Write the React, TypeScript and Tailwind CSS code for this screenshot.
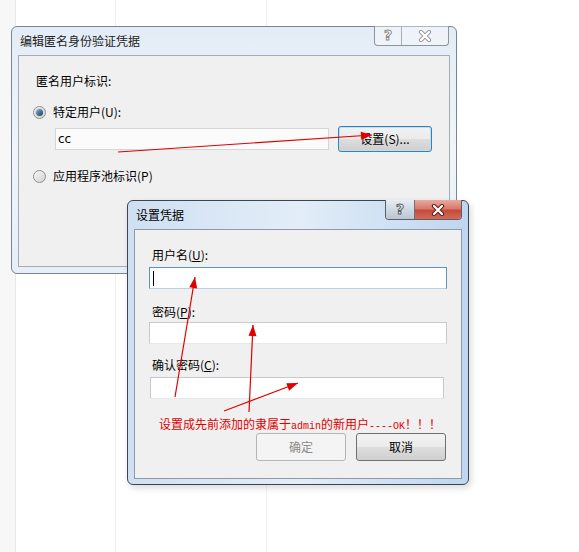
import React from 'react';

const btnBg = 'bg-[linear-gradient(#f2f2f2,#ebebeb_48%,#dddddd_52%,#cfcfcf)]';

const Radio = ({ checked }: { checked?: boolean }) => (
  <span className="w-[13px] h-[13px] rounded-full border border-[#8e8f8f] bg-linear-to-br from-[#f8f8f8] to-[#d2d2d2] flex items-center justify-center shrink-0">
    {checked && <span className="w-[7px] h-[7px] rounded-full bg-linear-to-br from-[#8fb6d6] to-[#1d3b58] ring-1 ring-[#c9dbe9]" />}
  </span>
);

const CloseGlyph = ({ active }: { active?: boolean }) => (
  <svg width="14" height="12" viewBox="0 0 14 12">
    <path d="M3 2 L11 10 M11 2 L3 10" stroke={active ? '#5a2018' : '#9c9c9c'} strokeWidth="4.2" strokeLinecap="round" />
    <path d="M3 2 L11 10 M11 2 L3 10" stroke="#ffffff" strokeWidth="2.2" strokeLinecap="round" />
  </svg>
);

function arrowHead(x1: number, y1: number, x2: number, y2: number) {
  const len = Math.hypot(x2 - x1, y2 - y1);
  const ux = (x2 - x1) / len;
  const uy = (y2 - y1) / len;
  const bx = x2 - ux * 11;
  const by = y2 - uy * 11;
  const px = -uy * 4;
  const py = ux * 4;
  return `${x2},${y2} ${bx + px},${by + py} ${bx - px},${by - py}`;
}

const arrows = [
  [118, 152, 372, 135],
  [175, 397, 195, 277],
  [249, 412, 253, 325],
  [224, 411, 298, 383],
];

export default function App() {
  return (
    <div className="relative w-[579px] h-[552px] overflow-hidden bg-white text-[12px] text-black font-['Noto_Sans_CJK_SC','Noto_Sans',sans-serif]">
      {/* background columns */}
      <div className="flex h-full">
        <div className="w-[16px] bg-[#f7f7f7] border-r border-[#e8e8e8]" />
        <div className="w-[100px] border-r border-[#ededed]" />
        <div className="w-[151px] border-r border-[#f0f0f0]" />
      </div>

      {/* 编辑匿名身份验证凭据 (inactive) */}
      <div className="absolute left-[11px] top-[26px] w-[446px] h-[248px] rounded-[6px] border border-[#7b8591] bg-linear-to-b from-[#e3ecf6] via-[#f1f5fa] to-[#e6eef7] flex flex-col px-[6px] pb-[6px]">
        <div className="h-[28px] flex items-center pl-[2px] text-[12px] text-[#222]">编辑匿名身份验证凭据</div>
        <div className="absolute top-[-1px] right-[7px] flex h-[20px] rounded-b-[4px] border border-t-0 border-[#8d949c] bg-white/40">
          <div className="w-[27px] flex items-center justify-center border-r border-[#a8aeb5] text-[14px] font-bold text-white [-webkit-text-stroke:1px_#8c8c8c] font-['DejaVu_Sans',sans-serif]">?</div>
          <div className="w-[46px] flex items-center justify-center"><CloseGlyph /></div>
        </div>
        <div className="flex-1 border border-[#a4adb7] bg-[#f0f0f0] flex flex-col pl-[14px] pt-[17px]">
          <div className="h-[16px] leading-[16px] ml-[3px]">匿名用户标识:</div>
          <div className="mt-[15px] h-[16px] flex items-center gap-[7px]">
            <Radio checked />
            <span className="leading-[16px]">特定用户(U):</span>
          </div>
          <div className="mt-[6px] h-[26px] flex items-center">
            <div className="ml-[22px] w-[274px] h-[22px] bg-[#fbfbfb] border border-[#d6d6d6] flex items-center pl-[2px] font-['DejaVu_Sans',sans-serif] text-[12px]">cc</div>
            <div className={`ml-[9px] w-[94px] h-[26px] rounded-[3px] border border-[#3c7fb1] shadow-[inset_0_0_0_1px_#b8e0f7] ${btnBg} flex items-center justify-center`}>设置(S)...</div>
          </div>
          <div className="mt-[16px] h-[16px] flex items-center gap-[7px]">
            <Radio />
            <span className="leading-[16px]">应用程序池标识(P)</span>
          </div>
        </div>
      </div>

      {/* 设置凭据 (active) */}
      <div className="absolute left-[127px] top-[200px] w-[342px] h-[285px] rounded-[6px] border border-[#3d4650] bg-linear-to-r from-[#cfe0f2] via-[#e2edf8] to-[#bfd6ef] flex flex-col px-[6px] pb-[5px] shadow-[2px_3px_6px_rgba(0,0,0,0.15)]">
        <div className="h-[28px] flex items-center pl-[2px] text-[12px] text-black">设置凭据</div>
        <div className="absolute top-[-1px] right-[6px] flex h-[20px] rounded-b-[4px] border border-t-0 border-[#5a5f66] overflow-hidden">
          <div className="w-[29px] flex items-center justify-center border-r border-[#6b7178] bg-linear-to-b from-[#e6edf4] to-[#b9c6d3] text-[14px] font-bold text-white [-webkit-text-stroke:1px_#5a5f66] font-['DejaVu_Sans',sans-serif]">?</div>
          <div className="w-[46px] flex items-center justify-center bg-[linear-gradient(#e9a99f,#d9796d_45%,#c74a3c_55%,#d46a55)]"><CloseGlyph active /></div>
        </div>
        <div className="flex-1 border border-[#8e9aa8] bg-[#f0f0f0] flex flex-col pl-[14px] pr-[15px] pt-[17px]">
          <div className="h-[16px] leading-[16px] ml-[3px]">用户名(<span className="underline">U</span>):</div>
          <div className="mt-[4px] w-[298px] h-[22px] bg-white border border-[#5d94bd] border-b-[#b7d1e6] flex items-center pl-[3px]">
            <span className="w-px h-[15px] bg-black" />
          </div>
          <div className="mt-[15px] h-[16px] leading-[16px] ml-[3px]">密码(<span className="underline">P</span>):</div>
          <div className="mt-[2px] w-[298px] h-[22px] bg-white border border-[#c7c9cc] border-b-[#e6e9ec]" />
          <div className="mt-[13px] h-[16px] leading-[16px] ml-[3px]">确认密码(<span className="underline">C</span>):</div>
          <div className="mt-[4px] ml-[1px] w-[294px] h-[22px] bg-white border border-[#c7c9cc] border-b-[#e6e9ec]" />
          <div className="mt-[17px] ml-[10px] h-[16px] leading-[16px] text-[12px] text-[#e00000] whitespace-nowrap font-['Noto_Sans_CJK_SC',serif]">
            设置成先前添加的隶属于<span className="font-['Liberation_Mono',monospace] text-[10px]">admin</span>的新用户<span className="font-['Liberation_Mono',monospace] text-[10px]">----OK</span>！！！
          </div>
          <div className="mt-[1px] flex justify-end gap-[10px]">
            <div className="w-[90px] h-[28px] rounded-[3px] border border-[#b3b7ba] bg-[#f4f4f4] text-[#8a8a8a] flex items-center justify-center">确定</div>
            <div className={`w-[90px] h-[28px] rounded-[3px] border border-[#707070] ${btnBg} flex items-center justify-center`}>取消</div>
          </div>
        </div>
      </div>

      {/* red annotation arrows */}
      <svg className="absolute inset-0" width="579" height="552">
        {arrows.map(([x1, y1, x2, y2], i) => (
          <g key={i}>
            <line x1={x1} y1={y1} x2={x2} y2={y2} stroke="#e00000" strokeWidth="1.2" />
            <polygon points={arrowHead(x1, y1, x2, y2)} fill="#e00000" />
          </g>
        ))}
      </svg>
    </div>
  );
}
